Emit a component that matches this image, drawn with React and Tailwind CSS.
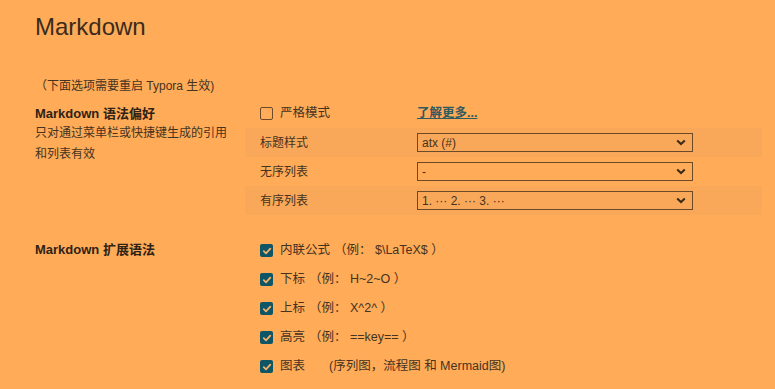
const font = { fontFamily: '"Liberation Sans", "Noto Sans CJK SC", sans-serif' };

const lists = [
  { label: '标题样式', value: 'atx (#)', striped: true },
  { label: '无序列表', value: '-', striped: false },
  { label: '有序列表', value: '1. ··· 2. ··· 3. ···', striped: true },
];

const extensions = [
  { name: '内联公式', hint: '（例：  $\\LaTeX$ ）' },
  { name: '下标', hint: '（例：  H~2~O ）' },
  { name: '上标', hint: '（例：  X^2^ ）' },
  { name: '高亮', hint: '（例：  ==key== ）' },
  { name: '图表', hint: '(序列图，流程图 和 Mermaid图)', wide: true },
];

function Check({ checked }) {
  if (!checked) {
    return <span className="w-[13px] h-[13px] rounded-[2px] border border-[#6b4a2a] shrink-0" />;
  }
  return (
    <span className="w-[13px] h-[13px] rounded-[2px] bg-[#0e5566] flex items-center justify-center shrink-0">
      <svg width="10" height="10" viewBox="0 0 10 10">
        <path d="M1.8 5.2 L4 7.3 L8.3 2.6" fill="none" stroke="#f7b06a" strokeWidth="1.8" strokeLinecap="round" strokeLinejoin="round" />
      </svg>
    </span>
  );
}

function Select({ value }) {
  return (
    <div className="relative w-[276px] h-[19px] border border-[#6b4a2a] flex items-center pl-[4px]">
      <span className="text-[12px] text-[#45331f]">{value}</span>
      <svg className="absolute right-[6px] top-[5px]" width="10" height="7" viewBox="0 0 10 7">
        <path d="M1.2 1.4 L5 5 L8.8 1.4" fill="none" stroke="#3b2a1a" strokeWidth="2" />
      </svg>
    </div>
  );
}

export default function App() {
  return (
    <div className="w-[775px] h-[389px] bg-[#ffab58] text-[#45331f] overflow-hidden pl-[35px] pt-[11px]" style={font}>
      <h1 className="text-[24px] leading-[32px] text-[#3a2b1c]">Markdown</h1>
      <p className="text-[12px] leading-[20px] mt-[33px]">（下面选项需要重启 Typora 生效)</p>

      {/* 语法偏好 */}
      <div className="flex mt-[3px]">
        <div className="w-[210px] pt-[5px]">
          <h3 className="text-[13px] font-bold leading-[19px] text-[#2f2214]">Markdown 语法偏好</h3>
          <p className="text-[12px] leading-[21px]">只对通过菜单栏或快捷键生成的引用<br />和列表有效</p>
        </div>
        <div className="w-[517px]">
          <div className="h-[29px] flex items-center pl-[15px]">
            <div className="w-[157px] flex items-center gap-[7px]">
              <Check checked={false} />
              <span className="text-[12.5px]">严格模式</span>
            </div>
            <a className="text-[12.5px] font-bold underline text-[#2f5a5e]">了解更多...</a>
          </div>
          {lists.map((row) => (
            <div
              key={row.label}
              className={`h-[29px] flex items-center pl-[15px] ${row.striped ? 'bg-[#f9a85a]' : ''}`}
            >
              <span className="w-[157px] text-[12px]">{row.label}</span>
              <Select value={row.value} />
            </div>
          ))}
        </div>
      </div>

      {/* 扩展语法 */}
      <div className="flex mt-[21px]">
        <div className="w-[210px] pt-[4px]">
          <h3 className="text-[13px] font-bold leading-[19px] text-[#2f2214]">Markdown 扩展语法</h3>
        </div>
        <div>
          {extensions.map((ext) => (
            <div key={ext.name} className="h-[29px] flex items-center gap-[7px] pl-[15px]">
              <Check checked />
              <span className="text-[12.5px]">
                {ext.name}
                <span className={ext.wide ? 'ml-[24px]' : 'ml-[4px]'}>{ext.hint}</span>
              </span>
            </div>
          ))}
        </div>
      </div>
    </div>
  );
}
